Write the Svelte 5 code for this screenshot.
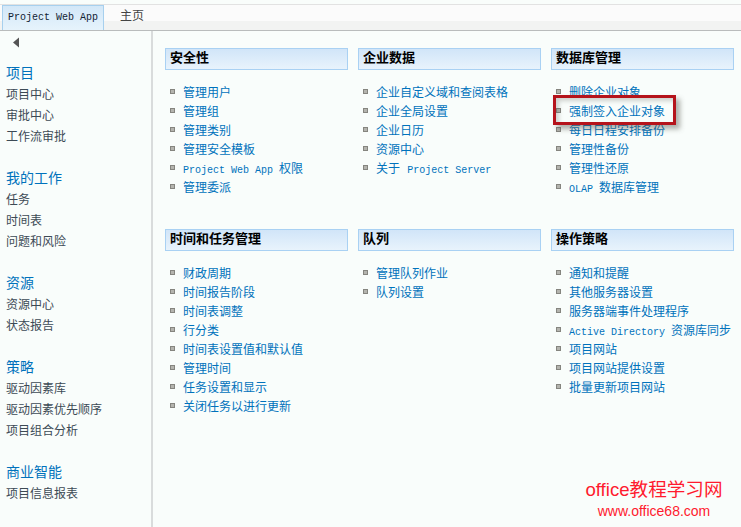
<script>
  const nav = [
    { title: '项目', items: ['项目中心', '审批中心', '工作流审批'] },
    { title: '我的工作', items: ['任务', '时间表', '问题和风险'] },
    { title: '资源', items: ['资源中心', '状态报告'] },
    { title: '策略', items: ['驱动因素库', '驱动因素优先顺序', '项目组合分析'] },
    { title: '商业智能', items: ['项目信息报表'] }
  ];

  const sections = [
    { title: '安全性', items: ['管理用户', '管理组', '管理类别', '管理安全模板', 'Project Web App 权限', '管理委派'] },
    { title: '企业数据', items: ['企业自定义域和查阅表格', '企业全局设置', '企业日历', '资源中心', '关于 Project Server'] },
    { title: '数据库管理', items: ['删除企业对象', '强制签入企业对象', '每日日程安排备份', '管理性备份', '管理性还原', 'OLAP 数据库管理'] },
    { title: '时间和任务管理', items: ['财政周期', '时间报告阶段', '时间表调整', '行分类', '时间表设置值和默认值', '管理时间', '任务设置和显示', '关闭任务以进行更新'] },
    { title: '队列', items: ['管理队列作业', '队列设置'] },
    { title: '操作策略', items: ['通知和提醒', '其他服务器设置', '服务器端事件处理程序', 'Active Directory 资源库同步', '项目网站', '项目网站提供设置', '批量更新项目网站'] }
  ];

  // latin runs are set smaller than the CJK around them
  const runs = (text) => text.split(/([A-Za-z][A-Za-z ]*)/).filter(Boolean);
  const isLatin = (run) => /^[A-Za-z]/.test(run);
</script>

<div class="page">
  <header class="topbar">
    <div class="tab">Project Web App</div>
    <div class="home">主页</div>
  </header>
  <div class="body">
    <aside class="side">
      <svg class="collapse" width="8" height="11" viewBox="0 0 8 11" aria-hidden="true">
        <path d="M7 0.5V10.5L1 5.5Z" fill="#555" />
      </svg>
      {#each nav as group}
        <div class="group">
          <div class="group-title">{group.title}</div>
          {#each group.items as item}
            <div class="group-item">{item}</div>
          {/each}
        </div>
      {/each}
    </aside>
    <main class="main">
      {#each sections as section}
        <section>
          <h2>{section.title}</h2>
          <ul>
            {#each section.items as item}
              <li>
                {#each runs(item) as run}
                  {#if isLatin(run)}<span class="latin">{run}</span>{:else}{run}{/if}
                {/each}
              </li>
            {/each}
          </ul>
        </section>
      {/each}
    </main>
  </div>
  <div class="callout"></div>
  <div class="mark">
    <div class="mark-name">office教程学习网</div>
    <div class="mark-url">www.office68.com</div>
  </div>
</div>

<style>
  :global(body) {
    margin: 0;
    background: #f9fdfb;
  }
  .page {
    position: relative;
    width: 741px;
    height: 527px;
    overflow: hidden;
    font-family: "Liberation Mono", "Noto Sans CJK SC", monospace;
    font-size: 12px;
    background: #f9fdfb;
  }
  .topbar {
    display: flex;
    align-items: stretch;
    box-sizing: border-box;
    height: 27px;
    margin-top: 4px;
    padding: 0 0 0 2px;
    background: linear-gradient(#fbfbfb 0, #fbfbfb 16px, #f2f3f2 16px);
    border-top: 1px solid #e2e2e2;
    border-bottom: 1px solid #b9bcbc;
  }
  .tab {
    box-sizing: border-box;
    width: 102px;
    padding-left: 5px;
    line-height: 23px;
    font-size: 10px;
    color: #123;
    background: linear-gradient(#d3e7f8, #e6f3fc);
    border: 1px solid #a7d0ee;
    border-bottom: 0;
  }
  .home {
    margin-left: 16px;
    line-height: 24px;
    color: #444;
  }
  .body {
    display: flex;
    height: 496px;
  }
  .side {
    box-sizing: border-box;
    width: 153px;
    padding: 6px 0 0 6px;
    border-right: 2px solid #d9dcdc;
  }
  .collapse {
    display: block;
    margin: 0 0 16px 6px;
  }
  .group {
    margin-bottom: 20px;
  }
  .group-title {
    margin-bottom: 1px;
    font-size: 14px;
    line-height: 21px;
    color: #0072bc;
  }
  .group-item {
    line-height: 21px;
    color: #3c4a55;
  }
  .main {
    display: grid;
    grid-template-columns: repeat(3, 183px);
    grid-template-rows: 181px auto;
    column-gap: 10px;
    padding: 17px 0 0 12px;
    align-content: start;
  }
  h2 {
    box-sizing: border-box;
    height: 22px;
    margin: 0;
    padding-left: 4px;
    font-size: 13px;
    line-height: 20px;
    font-weight: bold;
    color: #000;
    background: linear-gradient(#d1e5f8, #e8f3fc);
    border: 1px solid #a9d1f3;
  }
  ul {
    margin: 15px 0 0;
    padding: 0;
    list-style: none;
  }
  li {
    position: relative;
    padding-left: 18px;
    line-height: 19px;
    font-size: 12px;
    color: #0072bc;
    white-space: nowrap;
  }
  li::before {
    content: "";
    position: absolute;
    left: 5px;
    top: 4px;
    box-sizing: border-box;
    width: 5px;
    height: 5px;
    background: #b4b4ae;
    border: 1px solid #85857f;
  }
  .latin {
    font-size: 10px;
    white-space: pre;
  }
  .callout {
    position: absolute;
    left: 553px;
    top: 95px;
    box-sizing: border-box;
    width: 123px;
    height: 30px;
    border: 3px solid #b5131b;
    box-shadow: 4px 4px 5px rgba(80, 80, 70, 0.45), inset 3px 3px 4px rgba(80, 80, 70, 0.25);
  }
  .mark {
    position: absolute;
    left: 584px;
    top: 479px;
    width: 140px;
    color: #ff1a2e;
    font-family: "Liberation Sans", "Noto Sans CJK SC", sans-serif;
    text-align: center;
  }
  .mark-name {
    font-size: 18.6px;
    line-height: 22px;
    white-space: nowrap;
  }
  .mark-url {
    font-size: 14px;
    line-height: 20px;
  }
</style>
